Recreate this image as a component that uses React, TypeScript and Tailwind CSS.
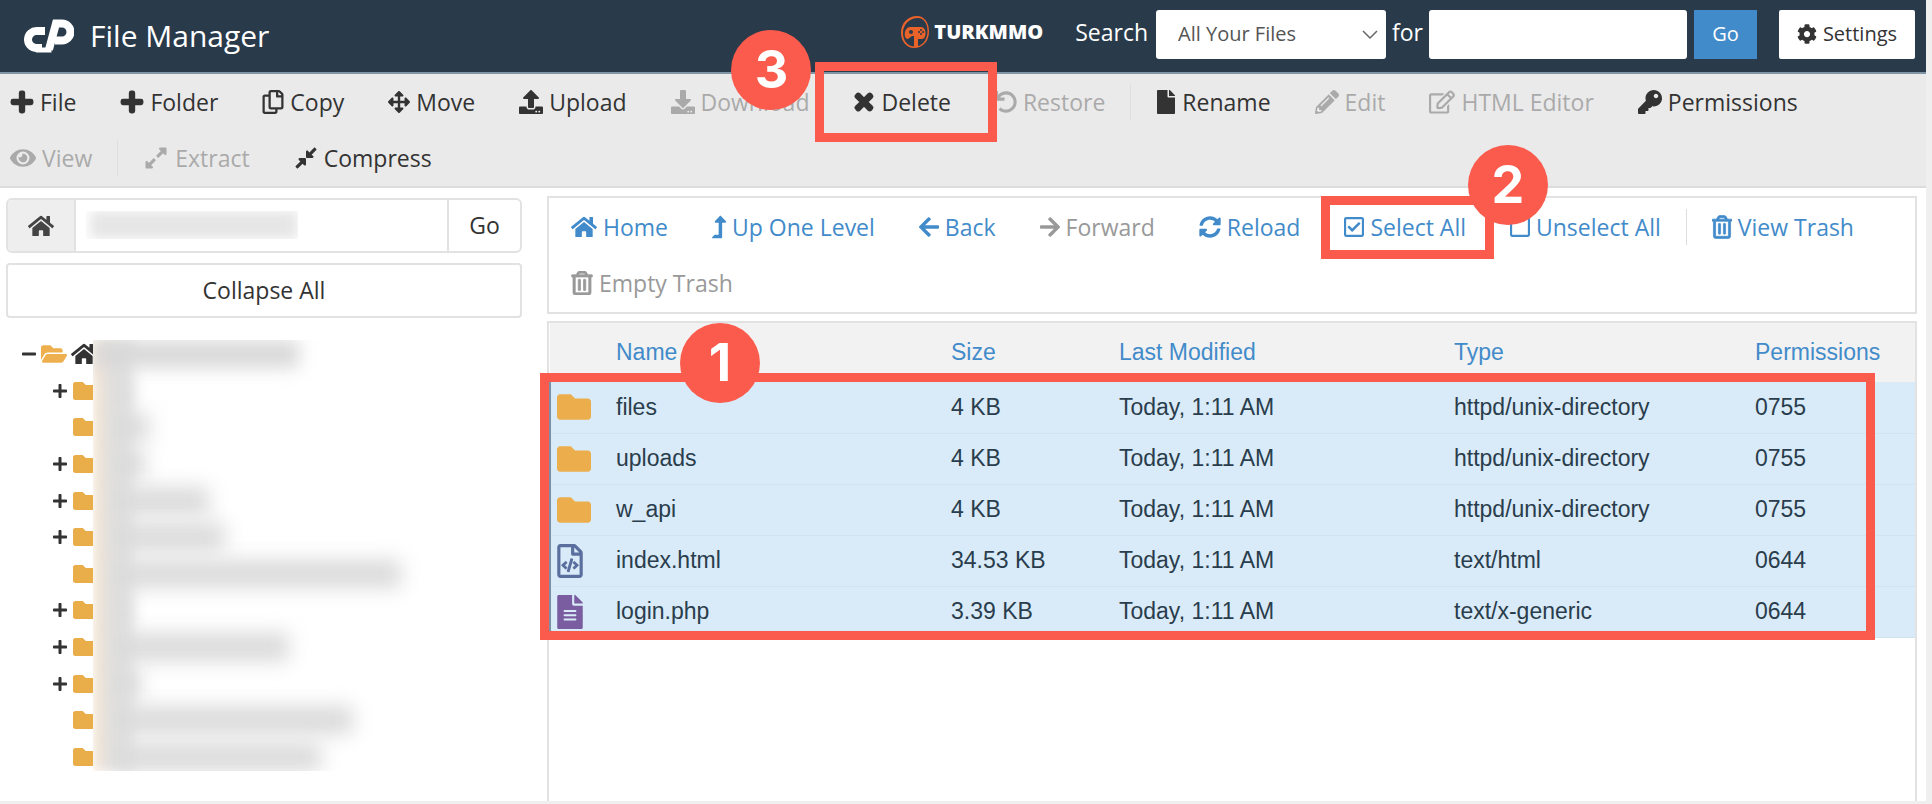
import { clsx } from 'clsx';
import type { ReactNode } from 'react';
import type { IconType } from 'react-icons';
import {
  FaArrowLeft,
  FaArrowRight,
  FaArrowsAlt,
  FaCog,
  FaCompressAlt,
  FaDownload,
  FaExpandAlt,
  FaEye,
  FaFile,
  FaFileAlt,
  FaFolder,
  FaFolderOpen,
  FaHome,
  FaKey,
  FaLevelUpAlt,
  FaMinus,
  FaPencilAlt,
  FaPlus,
  FaRegCheckSquare,
  FaRegCopy,
  FaRegEdit,
  FaRegFileCode,
  FaRegSquare,
  FaRegTrashAlt,
  FaSyncAlt,
  FaTimes,
  FaUndo,
  FaUpload,
} from 'react-icons/fa';

interface Action {
  label: string;
  icon: IconType;
  iconClass: string;
  disabled?: boolean;
  dividerBefore?: boolean;
  step?: ReactNode;
}

const fileActions: Action[] = [
  { label: 'File', icon: FaPlus, iconClass: 'w-6 [stroke-width:40]' },
  { label: 'Folder', icon: FaPlus, iconClass: 'w-6 [stroke-width:40]' },
  { label: 'Copy', icon: FaRegCopy, iconClass: 'w-[22px]' },
  { label: 'Move', icon: FaArrowsAlt, iconClass: 'w-[22px]' },
  { label: 'Upload', icon: FaUpload, iconClass: 'w-6' },
  { label: 'Download', icon: FaDownload, iconClass: 'w-6', disabled: true },
  {
    label: 'Delete',
    icon: FaTimes,
    iconClass: 'w-[22px] [stroke-width:50]',
    step: (
      <>
        <Outline className="-top-3 -right-6 -bottom-3 -left-4" />
        <Step className="-top-11 -left-25">3</Step>
      </>
    ),
  },
  { label: 'Restore', icon: FaUndo, iconClass: 'w-[22px]', disabled: true },
  { label: 'Rename', icon: FaFile, iconClass: 'w-5', dividerBefore: true },
  { label: 'Edit', icon: FaPencilAlt, iconClass: 'w-6', disabled: true },
  { label: 'HTML Editor', icon: FaRegEdit, iconClass: 'w-[26px]', disabled: true },
  { label: 'Permissions', icon: FaKey, iconClass: 'w-6' },
  { label: 'View', icon: FaEye, iconClass: 'w-[26px]', disabled: true },
  { label: 'Extract', icon: FaExpandAlt, iconClass: 'w-[26px]', disabled: true, dividerBefore: true },
  { label: 'Compress', icon: FaCompressAlt, iconClass: 'w-6' },
];

const folderActions: Action[] = [
  { label: 'Home', icon: FaHome, iconClass: 'w-[26px]' },
  { label: 'Up One Level', icon: FaLevelUpAlt, iconClass: 'w-3.5' },
  { label: 'Back', icon: FaArrowLeft, iconClass: 'w-5' },
  { label: 'Forward', icon: FaArrowRight, iconClass: 'w-5', disabled: true },
  { label: 'Reload', icon: FaSyncAlt, iconClass: 'w-[22px]' },
  {
    label: 'Select All',
    icon: FaRegCheckSquare,
    iconClass: 'w-5',
    step: (
      <>
        <Outline className="-top-[3px] -right-1.5 -bottom-1 -left-px" />
        <Step className="-top-13.5 -right-15">2</Step>
      </>
    ),
  },
  { label: 'Unselect All', icon: FaRegSquare, iconClass: 'w-5' },
  { label: 'View Trash', icon: FaRegTrashAlt, iconClass: 'w-5 [stroke-width:16]', dividerBefore: true },
  { label: 'Empty Trash', icon: FaRegTrashAlt, iconClass: 'w-[22px] [stroke-width:16]', disabled: true },
];

const files = [
  { name: 'files', size: '4 KB', modified: 'Today, 1:11 AM', type: 'httpd/unix-directory', permissions: '0755' },
  { name: 'uploads', size: '4 KB', modified: 'Today, 1:11 AM', type: 'httpd/unix-directory', permissions: '0755' },
  { name: 'w_api', size: '4 KB', modified: 'Today, 1:11 AM', type: 'httpd/unix-directory', permissions: '0755' },
  { name: 'index.html', size: '34.53 KB', modified: 'Today, 1:11 AM', type: 'text/html', permissions: '0644' },
  { name: 'login.php', size: '3.39 KB', modified: 'Today, 1:11 AM', type: 'text/x-generic', permissions: '0644' },
];

// width of the hidden folder name next to each entry
const folders = [
  { expandable: true, name: 'w-4' },
  { expandable: false, name: 'w-9' },
  { expandable: true, name: 'w-8' },
  { expandable: true, name: 'w-24' },
  { expandable: true, name: 'w-28' },
  { expandable: false, name: 'w-72' },
  { expandable: true, name: 'w-4' },
  { expandable: true, name: 'w-44' },
  { expandable: true, name: 'w-7' },
  { expandable: false, name: 'w-60' },
  { expandable: false, name: 'w-52' },
];

function Outline({ className }: { className: string }) {
  return (
    <span
      aria-hidden="true"
      className={clsx('pointer-events-none absolute z-10 border-[9px] border-[#fb5b4d]', className)}
    />
  );
}

function Step({ className, children }: { className: string; children: ReactNode }) {
  return (
    <span
      className={clsx(
        'pointer-events-none absolute z-20 flex size-20 items-center justify-center rounded-full bg-[#fb5b4d] font-[Inter,sans-serif] text-[52px] leading-none font-bold text-white',
        className,
      )}
    >
      {children}
    </span>
  );
}

function ActionButton({ action, className }: { action: Action; className: string }) {
  const Icon = action.icon;

  return (
    <div className="flex items-center">
      {action.dividerBefore && <span className="mx-[3px] h-9 w-px bg-[#dedede]" />}
      <div className="relative">
        <button
          type="button"
          disabled={action.disabled}
          className={clsx('flex items-center gap-1.5 px-[22px] whitespace-nowrap', className)}
        >
          <Icon className={clsx('h-6 shrink-0', action.iconClass)} />
          {action.label}
        </button>
        {action.step}
      </div>
    </div>
  );
}

function CpanelMark() {
  return (
    <svg viewBox="0 0 52 36" className="h-9 w-[52px]" fill="none" stroke="#fff" aria-label="cPanel">
      <path d="M23 13h-8a8.500 8.500 0 0 0-1 17h6" strokeWidth="8" />
      <path d="M27 31.500 34 5.500h6a8.500 8.500 0 0 1 0 17h-7" strokeWidth="8" />
      <path d="M14 32h15.500" strokeWidth="5" />
    </svg>
  );
}

function TurkmmoLogo() {
  return (
    <div className="flex items-center gap-1">
      <svg viewBox="0 0 30 34" className="h-[34px] w-[30px]" aria-hidden="true">
        <path
          fill="#e8622a"
          fillRule="evenodd"
          d="M17 1C8 1 1 8 1 17.500S7 33 14 33c9 0 15-7 15-16.500S24 1 17 1Zm1 2c6 0 9.500 5.500 9.500 13 0 8-4.500 14-9.500 15V24h4c5 0 5-12-1-12H10c-6 0-7 12-2 12l4-3h2v10.500C7 31 3 25 3 18 3 10 9 3 18 3Z"
        />
        <circle cx="11" cy="17" r="2" fill="#293a4a" />
        <path d="M21 14v6M18 17h6" stroke="#293a4a" strokeWidth="1.500" strokeDasharray="2 2" />
      </svg>
      <span className="text-xl leading-none font-extrabold text-white">TURKMMO</span>
    </div>
  );
}

function Header() {
  return (
    <header className="flex h-[74px] items-center justify-between border-b-2 border-[#8295a4] bg-[#293a4a] pr-[11px] pb-1 pl-[22px] text-[23px] text-white">
      <div className="flex items-center gap-4 pt-1">
        <CpanelMark />
        <h1 className="text-[30px] leading-9">File Manager</h1>
      </div>

      <form className="flex items-center">
        <div className="mr-8 pb-1">
          <TurkmmoLogo />
        </div>
        <label htmlFor="scope" className="mr-2 pb-1">
          Search
        </label>
        <div className="relative">
          <select
            id="scope"
            className="h-[49px] w-[230px] appearance-none rounded-[3px] bg-white px-[22px] text-xl text-[#555]"
          >
            <option>All Your Files</option>
          </select>
          <svg
            viewBox="0 0 16 10"
            className="pointer-events-none absolute top-5 right-2 h-2.5 w-4"
            fill="none"
            stroke="#666"
            strokeWidth="1.500"
          >
            <path d="m1 1 7 7 7-7" />
          </svg>
        </div>
        <label htmlFor="query" className="mx-1.5 pb-1">
          for
        </label>
        <input id="query" type="text" className="h-[49px] w-[258px] rounded-[3px] bg-white px-4 text-xl text-[#555]" />
        <button type="submit" className="ml-[7px] h-[49px] w-[63px] bg-[#428bca] text-xl">
          Go
        </button>
        <button
          type="button"
          className="ml-[22px] flex h-[49px] w-[136px] items-center justify-center gap-1.5 rounded-xs bg-white text-xl text-[#333]"
        >
          <FaCog className="size-5" />
          Settings
        </button>
      </form>
    </header>
  );
}

function Sidebar() {
  return (
    <aside className="w-[516px] shrink-0 pt-0.5 text-[23px] text-[#333]">
      <form className="flex h-[55px] overflow-hidden rounded-md border-2 border-[#e2e2e2]">
        <button type="button" aria-label="Home" className="flex w-[66px] items-center justify-center bg-[#eee] text-[#444]">
          <FaHome className="size-[26px]" />
        </button>
        <div className="relative flex-1 border-x-2 border-[#e2e2e2]">
          <input type="text" aria-label="Path" className="h-full w-full px-3" />
          <span className="pointer-events-none absolute top-[11px] left-2.5 h-7 w-[212px] overflow-hidden">
            <span className="absolute inset-y-0 right-0 left-1 bg-[#e6e6e6] blur-[6px]" />
          </span>
        </div>
        <button type="submit" className="w-[71px]">
          Go
        </button>
      </form>
      <button type="button" className="mt-2.5 h-[55px] w-full rounded-sm border-2 border-[#e2e2e2]">
        Collapse All
      </button>

      <div className="mt-[22px] flex h-[431px]">
        <ul className="flex w-[87px] shrink-0 flex-col justify-between overflow-hidden">
          <li className="flex h-7 items-center gap-1 pl-[15px]">
            <FaMinus className="size-4 shrink-0" />
            <FaFolderOpen className="size-[26px] shrink-0 text-[#eeb04e]" />
            <FaHome className="size-[26px] shrink-0" />
          </li>
          {folders.map((folder, index) => (
            <li key={index} className="flex h-7 items-center justify-end">
              {folder.expandable && <FaPlus className="mr-[5px] size-4 shrink-0" />}
              <span className="h-6 w-5 shrink-0 overflow-hidden">
                <FaFolder className="size-6 text-[#e9ad4a]" />
              </span>
            </li>
          ))}
        </ul>
        <ul className="relative flex flex-1 flex-col justify-between overflow-hidden">
          <li
            aria-hidden="true"
            className="absolute inset-y-0 left-0 w-10 bg-linear-to-r from-[#f7e4d0] via-[#e2e2e2] to-[#e2e2e2] blur-[6px]"
          />
          <li className="h-7 w-[206px] bg-[#d8d8d8] blur-[9px]" />
          {folders.map((folder, index) => (
            <li key={index} className="flex h-7 items-center pl-5">
              <span className={clsx('h-7 bg-[#dadada] blur-[10px]', folder.name)} />
            </li>
          ))}
        </ul>
      </div>
    </aside>
  );
}

function FileIcon({ type }: { type: string }) {
  if (type === 'text/html') return <FaRegFileCode className="h-[34px] w-[26px] text-[#5a6f9e]" />;
  if (type === 'text/x-generic') return <FaFileAlt className="h-[34px] w-[26px] text-[#7a5ca0]" />;
  return <FaFolder className="h-9 w-[34px] text-[#ecae4c]" />;
}

function FileTable() {
  return (
    <div className="relative mt-[7px] flex-1 border-2 border-b-0 border-[#e2e2e2]">
      <table className="w-full table-fixed text-left font-['Liberation_Sans',sans-serif] text-[23px]">
        <colgroup>
          <col className="w-[66px]" />
          <col className="w-[335px]" />
          <col className="w-[168px]" />
          <col className="w-[335px]" />
          <col className="w-[301px]" />
          <col />
        </colgroup>
        <thead>
          <tr className="h-[59px] bg-[#f2f2f2] text-[#428bca]">
            <th aria-label="Kind" />
            <th className="font-normal">Name</th>
            <th className="font-normal">Size</th>
            <th className="font-normal">Last Modified</th>
            <th className="font-normal">Type</th>
            <th className="font-normal">Permissions</th>
          </tr>
        </thead>
        <tbody className="border-l-2 border-[#7d8fa6] bg-[#d9ebf8] text-[#2a3d4c]">
          {files.map((file) => (
            <tr key={file.name} className="h-[51px] border-b border-[#d0e4f0]">
              <td className="pl-1.5">
                <FileIcon type={file.type} />
              </td>
              <td>{file.name}</td>
              <td>{file.size}</td>
              <td>{file.modified}</td>
              <td>{file.type}</td>
              <td>{file.permissions}</td>
            </tr>
          ))}
        </tbody>
      </table>
      <Outline className="top-[50px] right-10 -left-[9px] h-[267px]" />
      <Step className="top-0 left-[131px]">1</Step>
    </div>
  );
}

function App() {
  return (
    <div className="flex min-h-screen flex-col border-r-[6px] border-b-[3px] border-[#efefef] bg-white font-['Open_Sans',sans-serif]">
      <Header />
      <nav className="border-b-2 border-[#dcdcdc] bg-[#eaeaea] text-[23px] text-[#333]">
        <div className="-ml-3 flex flex-wrap">
          {fileActions.map((action) => (
            <ActionButton key={action.label} action={action} className="h-14 disabled:text-[#aaa]" />
          ))}
        </div>
      </nav>

      <main className="flex flex-1 gap-[25px] pt-2 pr-[9px] pl-1.5">
        <Sidebar />
        <section className="flex min-w-0 flex-1 flex-col">
          <nav className="flex flex-wrap border-2 border-[#e2e2e2] py-px text-[23px] text-[#428bca]">
            {folderActions.map((action) => (
              <ActionButton key={action.label} action={action} className="h-14 disabled:text-[#999]" />
            ))}
          </nav>
          <FileTable />
        </section>
      </main>
    </div>
  );
}

export default App;
